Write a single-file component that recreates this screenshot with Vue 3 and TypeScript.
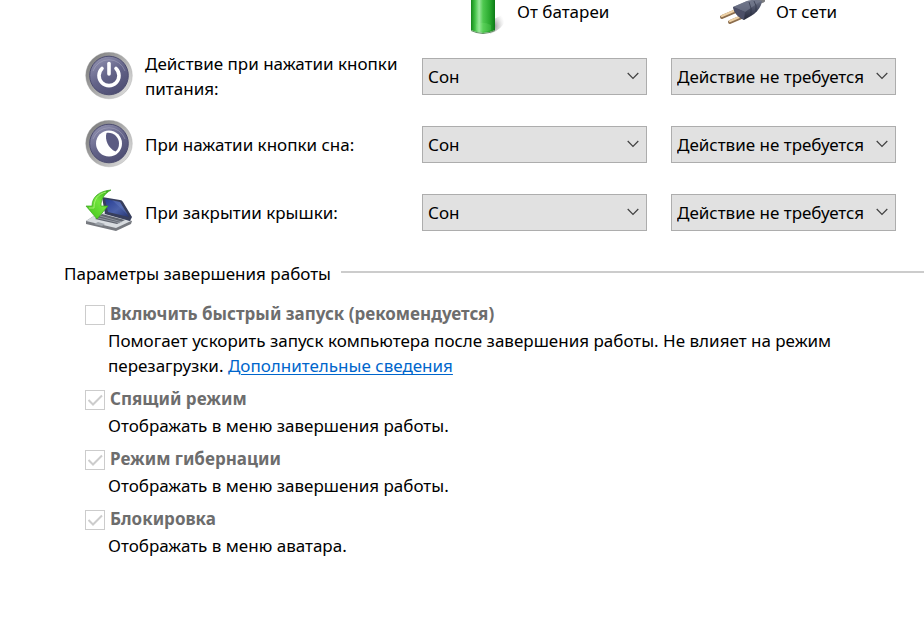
<script setup lang="ts">
import { reactive } from 'vue'

interface ActionRow {
  id: string
  label: string
  icon: 'power' | 'sleep' | 'lid'
  battery: string
  mains: string
}

interface ShutdownOption {
  id: string
  title: string
  description: string
  checked: boolean
  link?: string
}

const choices: string[] = ['Действие не требуется', 'Сон', 'Гибернация', 'Завершение работы']

const rows = reactive<ActionRow[]>([
  { id: 'power', label: 'Действие при нажатии кнопки питания:', icon: 'power', battery: 'Сон', mains: 'Действие не требуется' },
  { id: 'sleep', label: 'При нажатии кнопки сна:', icon: 'sleep', battery: 'Сон', mains: 'Действие не требуется' },
  { id: 'lid', label: 'При закрытии крышки:', icon: 'lid', battery: 'Сон', mains: 'Действие не требуется' },
])

const options = reactive<ShutdownOption[]>([
  {
    id: 'fast',
    title: 'Включить быстрый запуск (рекомендуется)',
    description: 'Помогает ускорить запуск компьютера после завершения работы. Не влияет на режим перезагрузки.',
    checked: false,
    link: 'Дополнительные сведения',
  },
  { id: 'standby', title: 'Спящий режим', description: 'Отображать в меню завершения работы.', checked: true },
  { id: 'hibernate', title: 'Режим гибернации', description: 'Отображать в меню завершения работы.', checked: true },
  { id: 'lock', title: 'Блокировка', description: 'Отображать в меню аватара.', checked: true },
])
</script>

<template>
  <main class="page">
    <section class="actions">
      <div class="row head">
        <span></span>
        <div class="source">
          <svg width="36" height="36" viewBox="0 0 36 36" aria-hidden="true">
            <defs>
              <linearGradient id="cell" x1="0" x2="1" y1="0" y2="0">
                <stop offset="0" stop-color="#16861c" />
                <stop offset=".16" stop-color="#3fbf42" />
                <stop offset=".34" stop-color="#9be89c" />
                <stop offset=".5" stop-color="#4fc950" />
                <stop offset=".8" stop-color="#27a62c" />
                <stop offset="1" stop-color="#0c7a16" />
              </linearGradient>
              <radialGradient id="cellShade" cx=".25" cy=".6" r=".75">
                <stop offset="0" stop-color="#777" stop-opacity=".8" />
                <stop offset="1" stop-color="#ccc" stop-opacity="0" />
              </radialGradient>
            </defs>
            <path d="M22 20 L34 14 Q38 24 26 31 L20 34Z" fill="url(#cellShade)" />
            <path d="M1 0 H25 V30 Q13 36 1 30Z" fill="url(#cell)" />
            <path d="M1 30 Q13 36 25 30 V31 Q13 37 1 31Z" fill="#5d8f5e" />
            <path d="M6 24 Q13 21 21 25 V30 Q13 33 6 30Z" fill="#8cf484" opacity=".18" />
          </svg>
          <span>От батареи</span>
        </div>
        <div class="source">
          <svg width="46" height="36" viewBox="0 0 46 36" aria-hidden="true">
            <defs>
              <linearGradient id="plug" x1="0" x2="0" y1="0" y2="1">
                <stop offset="0" stop-color="#6d7386" />
                <stop offset=".5" stop-color="#454a60" />
                <stop offset="1" stop-color="#252838" />
              </linearGradient>
            </defs>
            <path d="M32 0 H47 Q46 3 40 4 L35 5Z" fill="#7c7d80" />
            <path d="M3 17 L17 11 M11 22 L25 16" stroke="#8c6d4d" stroke-width="4" stroke-linecap="round" />
            <path d="M3 16 L17 10 M11 21 L25 15" stroke="#edd1a6" stroke-width="2.4" stroke-linecap="round" />
            <path d="M14 7 L28 1 Q35 -1 43 1 L42 5 Q39 12 32 16 L25 20 Q15 15 14 7Z" fill="url(#plug)" />
            <path d="M14 7 L28 1 Q35 -1 43 1 L39 3 L26 12Z" fill="#777c91" opacity=".65" />
            <path d="M14 7 Q18 8 26 12 L25 20 Q16 16 14 7Z" fill="#4c4f67" />
            <path d="M30 2 Q33 8 32 15 M35 1 Q38 5 37 12" stroke="#272b3e" fill="none" opacity=".6" />
          </svg>
          <span>От сети</span>
        </div>
      </div>

      <div v-for="row in rows" :key="row.id" class="row">
        <div class="name">
          <svg v-if="row.icon !== 'lid'" width="48" height="48" viewBox="0 0 48 48" aria-hidden="true">
            <defs>
              <linearGradient :id="'rim-' + row.id" x1="0" x2="1" y1=".1" y2=".9">
                <stop offset="0" stop-color="#777" />
                <stop offset=".45" stop-color="#a6a6a6" />
                <stop offset="1" stop-color="#e2e2e2" />
              </linearGradient>
              <linearGradient :id="'face-' + row.id" x1=".2" x2=".8" y1="0" y2="1">
                <stop offset="0" stop-color="#9292b0" />
                <stop offset=".5" stop-color="#636388" />
                <stop offset="1" stop-color="#4b4b70" />
              </linearGradient>
            </defs>
            <circle cx="24" cy="23.5" r="23.3" :fill="`url(#rim-${row.id})`" stroke="#aaa" stroke-width=".4" />
            <circle cx="24" cy="23.5" r="19.3" :fill="`url(#face-${row.id})`" stroke="#4d4d70" stroke-width="1" />
            <path d="M8 19 A17 17 0 0 1 40 19" fill="none" stroke="#b7b7ca" opacity=".4" />
            <g v-if="row.icon === 'power'" fill="none" stroke="#fff" stroke-width="3.6" stroke-linecap="round">
              <path d="M17 16.5 A10 10 0 1 0 31 16.5" />
              <path d="M24 11.5 V22" />
            </g>
            <g v-else>
              <circle cx="24" cy="23.5" r="13" fill="#fff" />
              <path d="M21.5 13 C28 12 34 17 34 23.5 C34 27 33 29.5 30.5 31.5 C23.5 28.5 19.5 20 21.5 13Z" fill="#5b5b82" />
            </g>
          </svg>
          <svg v-else width="48" height="48" viewBox="0 0 48 48" aria-hidden="true">
            <defs>
              <linearGradient id="lidScreen" x1="0" x2="1" y1="0" y2="1">
                <stop offset="0" stop-color="#263c94" />
                <stop offset=".55" stop-color="#4c62aa" />
                <stop offset="1" stop-color="#263472" />
              </linearGradient>
              <linearGradient id="lidArrow" x1="0" x2="1" y1="1" y2="0">
                <stop offset="0" stop-color="#3cc016" />
                <stop offset=".55" stop-color="#71e33c" />
                <stop offset="1" stop-color="#2fa812" />
              </linearGradient>
            </defs>
            <path d="M1 33 L15 24 L47 33 L46 36 L31 43 L1 36Z" fill="#777a80" />
            <path d="M1 33 L15 24 L46 33 L31 40Z" fill="#d8dce0" />
            <path d="M10 31 L17 26 L40 32 L32 36Z" fill="#60656f" />
            <path d="M13 30 L35 35 M15 28 L37 34" stroke="#a4a9b1" stroke-width=".7" />
            <path d="M13 34 L20 36 L17 38 L9 36Z" fill="#9fa5ac" />
            <path d="M17 9 L35 12 Q37 12 38 14 L47 29 L45 33 L20 26Z" fill="#373e5c" />
            <path d="M20 11 L35 14 L44 29 L23 24Z" fill="url(#lidScreen)" />
            <path d="M27 12 L35 14 L43 27Z" fill="#7890ce" opacity=".3" />
            <path d="M26 2 C14 3 7 9 7 18 L1 18 L12 31 L23 18 L16 18 C16 11 19 6 26 2Z" fill="url(#lidArrow)" stroke="#3ca322" stroke-width=".7" />
            <path d="M21 4 C13 6 9 11 9 20 L4 20" fill="none" stroke="#b4f67f" stroke-width=".8" />
          </svg>
          <span>{{ row.label }}</span>
        </div>
        <div class="pick">
          <select v-model="row.battery" :aria-label="row.label + ' От батареи'">
            <option v-for="c in choices" :key="c">{{ c }}</option>
          </select>
          <svg class="chevron" width="12" height="8" viewBox="0 0 12 8" aria-hidden="true"><path d="M.7 1 L6 6.3 L11.3 1" /></svg>
        </div>
        <div class="pick">
          <select v-model="row.mains" :aria-label="row.label + ' От сети'">
            <option v-for="c in choices" :key="c">{{ c }}</option>
          </select>
          <svg class="chevron" width="12" height="8" viewBox="0 0 12 8" aria-hidden="true"><path d="M.7 1 L6 6.3 L11.3 1" /></svg>
        </div>
      </div>
    </section>

    <section class="shutdown">
      <h2 class="legend">Параметры завершения работы</h2>
      <div class="options">
        <div v-for="o in options" :key="o.id" class="option">
          <label class="title" :for="o.id">
            <span class="box">
              <input :id="o.id" v-model="o.checked" type="checkbox" disabled />
              <svg v-if="o.checked" class="tick" width="20" height="20" viewBox="0 0 20 20" aria-hidden="true"><path d="M3.5 10 L8 14.5 L17 5.5" /></svg>
            </span>
            <span>{{ o.title }}</span>
          </label>
          <p>{{ o.description }}<template v-if="o.link">{{ ' ' }}<a href="#">{{ o.link }}</a></template></p>
        </div>
      </div>
    </section>
  </main>
</template>

<style>
body {
  background: #fff;
}
</style>

<style scoped>
.page {
  font: 17px/25px "Noto Sans", "Open Sans", sans-serif;
  color: #000;
  padding-left: 64px;
}
.row {
  display: grid;
  grid-template-columns: minmax(0, 1fr) 225px 225px;
  column-gap: 24px;
  align-items: center;
  min-height: 68px;
  padding: 0 28px 0 21px;
}
.head {
  min-height: 42px;
  align-items: start;
}
.source {
  display: flex;
  gap: 11px;
  height: 36px;
  padding-left: 48px;
  line-height: 24px;
}
.source svg,
.name svg {
  flex: none;
}
.name {
  display: flex;
  align-items: center;
  gap: 12px;
}
.pick {
  display: grid;
  align-items: center;
}
.pick > * {
  grid-area: 1 / 1;
}
select {
  appearance: none;
  width: 100%;
  height: 37px;
  margin: 0;
  padding: 0 28px 0 5px;
  border: 1px solid #adadad;
  border-radius: 0;
  background: #e1e1e1;
  color: #000;
  font: inherit;
}
.chevron {
  justify-self: end;
  margin-right: 8px;
  fill: none;
  stroke: #404040;
  stroke-width: 1.2;
  pointer-events: none;
}
.shutdown {
  padding-top: 15px;
}
.legend {
  display: flex;
  align-items: center;
  gap: 10px;
  margin: 0;
  font: inherit;
}
.legend::after {
  content: "";
  flex: 1;
  height: 2px;
  margin-bottom: 3px;
  background: #ccc;
}
.options {
  display: grid;
  gap: 8px;
  padding: 15px 64px 0 21px;
}
.title {
  display: flex;
  align-items: center;
  gap: 5px;
  height: 27px;
  line-height: 24px;
  padding-bottom: 1px;
  box-sizing: border-box;
  font-weight: 700;
  color: #6d6d6d;
}
.box {
  display: grid;
  flex: none;
  padding-top: 2px;
}
.box > * {
  grid-area: 1 / 1;
}
.box input {
  appearance: none;
  width: 20px;
  height: 20px;
  margin: 0;
  border: 1px solid #ccc;
  background: #fff;
}
.tick {
  position: relative;
  fill: none;
  stroke: #ccc;
  stroke-width: 2;
  pointer-events: none;
}
.option p {
  margin: 0;
  padding-left: 23px;
}
a {
  color: #0066cc;
  text-decoration: underline;
  text-underline-offset: 2px;
  text-decoration-thickness: 1px;
}
</style>
